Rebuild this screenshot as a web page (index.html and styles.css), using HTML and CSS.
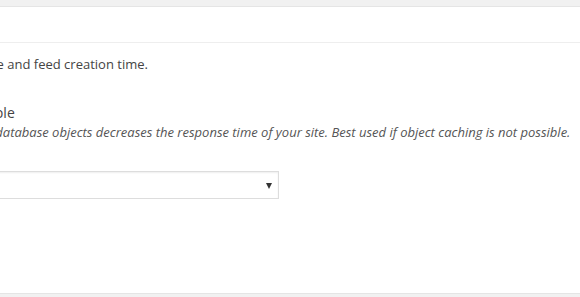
FILE: index.html
```html
<!DOCTYPE html>
<html lang="en">
<head>
    <meta charset="UTF-8">
    <title>General Settings - Database Cache</title>
    <link rel="stylesheet" href="styles.css">
</head>
<body>
    <div class="postbox">
        <h3 class="hndle">Database Cache</h3>
        <div class="inside">
            <p class="intro">Enable database caching to reduce post, page and feed creation time.</p>

            <div class="form-row first">
                <div class="th">Database Cache:</div>
                <div class="td">
                    <label class="check"><input type="checkbox"> Enable</label>
                    <span class="description">Caching database objects decreases the response time of your site. Best used if object caching is not possible.</span>
                </div>
            </div>

            <div class="form-row second">
                <div class="th">Database Cache Method:</div>
                <div class="td">
                    <span class="select-wrap">
                        <select class="method">
                            <option></option>
                        </select>
                    </span>
                </div>
            </div>
        </div>
    </div>
</body>
</html>
```

FILE: styles.css
```css
body {
    margin: 0;
    background: #f1f1f1;
    font-family: "Open Sans", sans-serif;
    font-size: 13px;
    color: #444;
    overflow: hidden;
}

.postbox {
    margin: 6px -40px 0 -286px;
    height: 286px;
    background: #fff;
    border: 1px solid #e5e5e5;
}

.hndle {
    margin: 0;
    height: 36px;
    box-sizing: border-box;
    padding: 8px 12px;
    font-size: 14px;
    font-weight: 600;
    line-height: 19px;
    border-bottom: 1px solid #eee;
}

.inside {
    padding: 0 12px;
}

.intro {
    margin: 12px 0 0;
    line-height: 19.5px;
}

.form-row {
    display: grid;
    grid-template-columns: 219px 1fr;
}

.form-row.first {
    margin-top: 27px;
}

.form-row.second {
    margin-top: 29px;
}

.th {
    font-size: 14px;
    font-weight: 600;
    color: #23282d;
}

.check {
    display: block;
    margin-left: 1px;
    font-size: 14px;
    line-height: 21px;
}

.check input {
    width: 16px;
    height: 16px;
    margin: 0 4px 0 0;
    vertical-align: -3px;
}

.description {
    display: block;
    font-style: italic;
    line-height: 19.5px;
    color: #555;
    white-space: nowrap;
}

.select-wrap {
    position: relative;
    display: inline-block;
}

.select-wrap::after {
    content: "";
    position: absolute;
    right: 7px;
    top: 12px;
    border-left: 3.5px solid transparent;
    border-right: 3.5px solid transparent;
    border-top: 6px solid #333;
    pointer-events: none;
}

.method {
    -webkit-appearance: none;
    appearance: none;
    display: block;
    width: 333px;
    height: 28px;
    box-sizing: border-box;
    margin: 0;
    padding: 2px 8px;
    background: #fff;
    border: 1px solid #ddd;
    border-radius: 0;
    box-shadow: inset 0 1px 2px rgba(0, 0, 0, 0.07);
    font-family: inherit;
    font-size: 14px;
    color: #32373c;
}
```
